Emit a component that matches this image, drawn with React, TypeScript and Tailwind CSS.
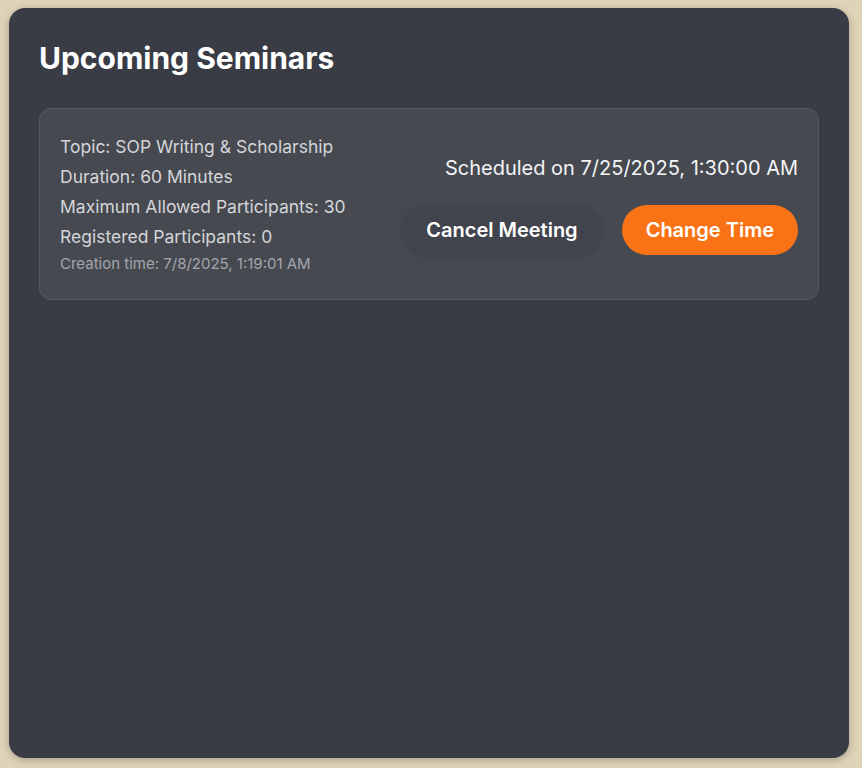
export default function App() {
  return (
    <div className="min-h-screen bg-[#e0d4b8] pt-2 pl-[9px] font-['Inter',sans-serif]">
      <div className="w-[840px] h-[750px] rounded-2xl bg-[#393c45] px-[30px] pt-8 shadow-[0_2px_8px_rgba(0,0,0,0.25)]">
        <h1 className="text-3xl font-bold text-white mb-8">Upcoming Seminars</h1>

        <div className="flex items-center justify-between rounded-xl border border-[#565962] bg-[#464950] px-5 pt-[23px] pb-[25px]">
          <div className="text-[17.5px] text-[#d4d6da]">
            <p className="leading-[30px]">Topic: SOP Writing &amp; Scholarship</p>
            <p className="leading-[30px]">Duration: 60 Minutes</p>
            <p className="leading-[30px]">Maximum Allowed Participants: 30</p>
            <p className="leading-[30px]">Registered Participants: 0</p>
            <p className="mt-[2px] text-[15px] leading-5 text-[#a3a6ad]">Creation time: 7/8/2025, 1:19:01 AM</p>
          </div>

          <div className="mt-[3px] flex flex-col items-end gap-[23px]">
            <p className="text-xl leading-7 text-[#f3f4f6]">Scheduled on 7/25/2025, 1:30:00 AM</p>
            <div className="flex gap-5">
              <button className="h-[50px] rounded-full bg-[#41444c] px-6 text-xl font-semibold text-white shadow-[0_1px_4px_rgba(0,0,0,0.15)]">
                Cancel Meeting
              </button>
              <button className="h-[50px] rounded-full bg-[#f97316] px-6 text-xl font-semibold text-white">
                Change Time
              </button>
            </div>
          </div>
        </div>
      </div>
    </div>
  )
}
